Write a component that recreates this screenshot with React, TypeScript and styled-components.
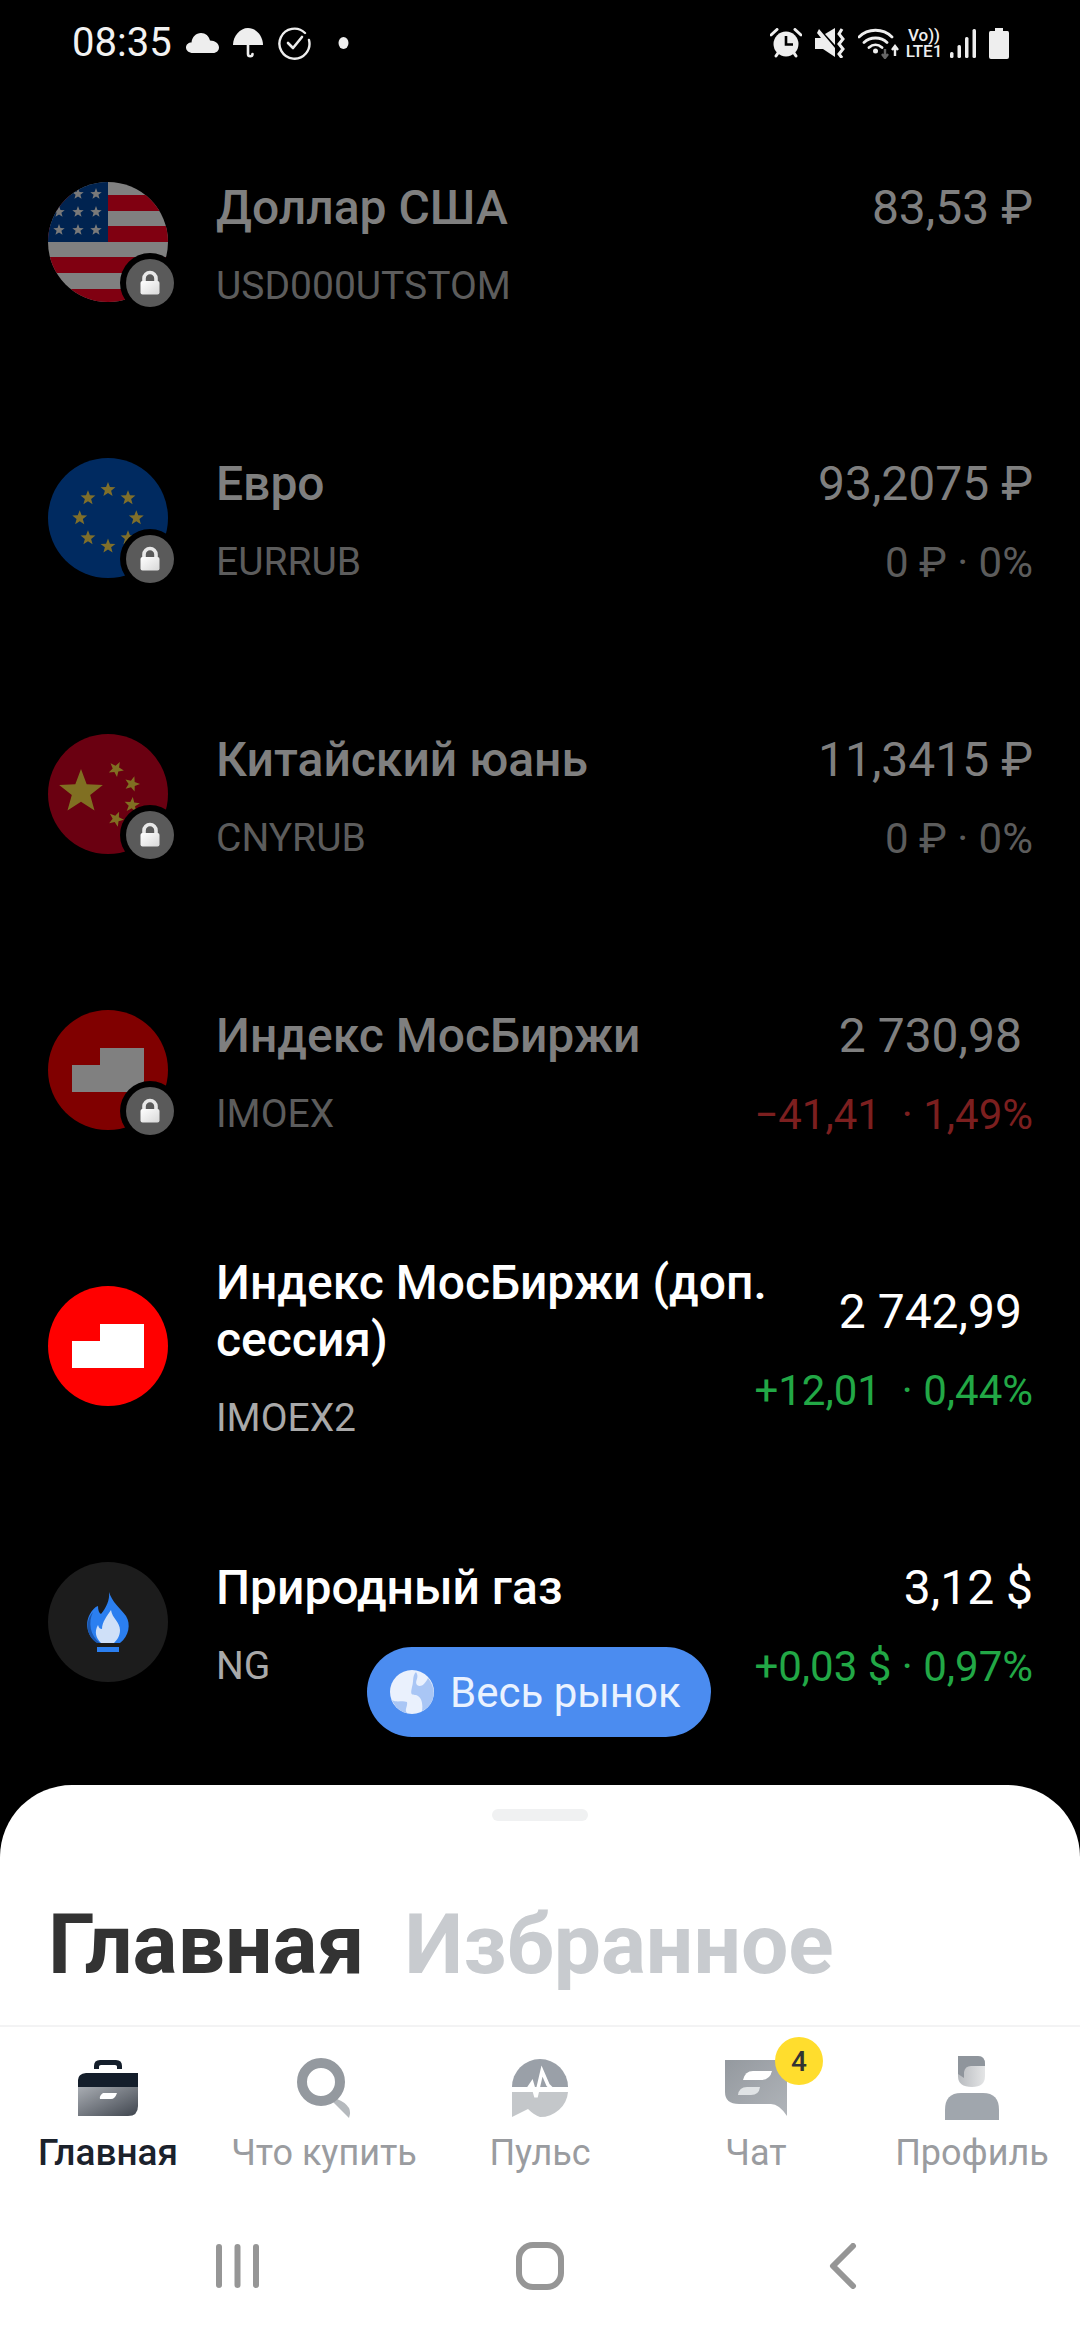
import React from 'react';
import styled, { createGlobalStyle } from 'styled-components';

const GlobalStyle = createGlobalStyle`
  html, body { margin: 0; padding: 0; background: #000; }
  #root { width: 1080px; height: 2340px; }
  * { box-sizing: border-box; }
`;

const Page = styled.div`
  width: 1080px;
  height: 2340px;
  display: flex;
  flex-direction: column;
  background: #000;
  overflow: hidden;
  font-family: Roboto, "Noto Sans", sans-serif;
`;

const StatusBar = styled.header`
  height: 86px;
  flex: none;
  display: flex;
  align-items: center;
  justify-content: space-between;
  padding: 0 71px 0 72px;
  color: #eee;
`;

const StatusGroup = styled.div`
  display: flex;
  align-items: center;
`;

const Clock = styled.span`
  font-size: 40px;
  line-height: 44px;
  width: 114px;
  color: #f2f2f2;
`;

const StatusIcon = styled.svg<{ $gap?: number }>`
  display: block;
  flex: none;
  margin-right: ${p => p.$gap ?? 0}px;
`;

const NetLabel = styled.div`
  width: 40px;
  margin-right: 6px;
  display: flex;
  flex-direction: column;
  align-items: center;
  font-size: 17px;
  line-height: 16px;
  font-weight: 500;
  color: #eee;
`;

const Market = styled.main`
  flex: 1;
  min-height: 0;
  position: relative;
  padding-top: 18px;
  overflow: hidden;
`;

const Row = styled.article`
  height: 276px;
  display: flex;
  align-items: center;
  padding: 0 47px 0 48px;
`;

const Avatar = styled.div`
  position: relative;
  width: 120px;
  height: 120px;
  flex: none;
  margin-right: 48px;
`;

const Face = styled.div<{ $dim: boolean }>`
  width: 120px;
  height: 120px;
  border-radius: 50%;
  overflow: hidden;
  opacity: ${p => (p.$dim ? 0.5 : 1)};
  svg { display: block; }
`;

const LockBadge = styled.div`
  position: absolute;
  right: -6px;
  bottom: -5px;
  width: 48px;
  height: 48px;
  border-radius: 50%;
  background: #5a5a5a;
  box-shadow: 0 0 0 6px #000;
  svg { display: block; }
`;

const Info = styled.div`
  flex: 1;
  min-width: 0;
  padding-top: 4px;
`;

const Title = styled.div<{ $dim: boolean }>`
  font-size: 48px;
  line-height: 57px;
  font-weight: 500;
  color: ${p => (p.$dim ? '#7f7f7f' : '#fff')};
`;

const Ticker = styled.div<{ $dim: boolean }>`
  margin-top: 26px;
  font-size: 39px;
  line-height: 48px;
  color: ${p => (p.$dim ? '#5c5c5c' : '#a9a9a9')};
`;

const Quote = styled.div`
  flex: none;
  padding-top: 6px;
  margin-left: -42px;
  text-align: right;
`;

const Price = styled.div<{ $dim: boolean; $inset: boolean }>`
  font-size: 48px;
  line-height: 57px;
  padding-right: ${p => (p.$inset ? 11 : 0)}px;
  color: ${p => (p.$dim ? '#7f7f7f' : '#fff')};
`;

const Change = styled.div<{ $tone: 'up' | 'down' | 'flat' }>`
  margin-top: 27px;
  min-height: 48px;
  font-size: 42px;
  line-height: 48px;
  white-space: pre;
  color: ${p => (p.$tone === 'up' ? '#22a846' : p.$tone === 'down' ? '#7c1f1f' : '#5c5c5c')};
`;

const MarketButton = styled.button`
  position: absolute;
  left: 367px;
  bottom: 48px;
  width: 344px;
  height: 90px;
  display: flex;
  align-items: center;
  gap: 16px;
  padding: 0 0 0 23px;
  border: 0;
  border-radius: 45px;
  background: #4b8cf0;
  color: #eaf2ff;
  font-family: inherit;
  font-size: 42px;
  svg { display: block; flex: none; }
`;

const Sheet = styled.section`
  height: 555px;
  flex: none;
  background: #fff;
  border-radius: 72px 72px 0 0;
  display: flex;
  flex-direction: column;
`;

const Grip = styled.div`
  width: 96px;
  height: 12px;
  margin: 24px auto 0;
  border-radius: 6px;
  background: #f0f1f2;
`;

const Tabs = styled.nav`
  height: 206px;
  display: flex;
  align-items: center;
  gap: 40px;
  padding: 44px 0 0 48px;
  border-bottom: 2px solid #f3f3f4;
  font-size: 84px;
  line-height: 100px;
  font-weight: 700;
`;

const BigTab = styled.span<{ $on: boolean }>`
  font-family: Roboto, sans-serif;
  color: ${p => (p.$on ? '#333' : '#c8cbcf')};
`;

const BottomNav = styled.div`
  display: grid;
  grid-template-columns: repeat(5, 1fr);
  padding-top: 26px;
`;

const NavItem = styled.div`
  position: relative;
  display: flex;
  flex-direction: column;
  align-items: center;
`;

const NavIcon = styled.div`
  position: relative;
  height: 70px;
  display: flex;
  align-items: center;
  justify-content: center;
  svg { display: block; }
`;

const NavLabel = styled.span<{ $on: boolean }>`
  margin-top: 8px;
  font-size: ${p => (p.$on ? 37 : 36)}px;
  line-height: 44px;
  font-weight: ${p => (p.$on ? 500 : 400)};
  color: ${p => (p.$on ? '#1b222c' : '#9a9ca0')};
  white-space: nowrap;
`;

const CountBadge = styled.span`
  position: absolute;
  left: 50px;
  top: -16px;
  width: 48px;
  height: 48px;
  border-radius: 50%;
  display: flex;
  align-items: center;
  justify-content: center;
  background: #ffdd2d;
  color: #333;
  font-size: 28px;
  font-weight: 500;
`;

const SystemNav = styled.div`
  display: grid;
  grid-template-columns: repeat(3, 1fr);
  padding: 0 86px 0 87px;
  margin-top: 67px;
  height: 48px;
  color: #969696;
`;

const SystemKey = styled.div`
  display: flex;
  align-items: center;
  justify-content: center;
`;

const star = (cx: number, cy: number, r: number, rot = 0) => {
  const pts: string[] = [];
  for (let i = 0; i < 10; i++) {
    const rad = i % 2 === 0 ? r : r * 0.42;
    const a = -Math.PI / 2 + rot + (i * Math.PI) / 5;
    pts.push(`${(cx + rad * Math.cos(a)).toFixed(2)},${(cy + rad * Math.sin(a)).toFixed(2)}`);
  }
  return pts.join(' ');
};

const UsFlag = () => (
  <svg width="120" height="120" viewBox="0 0 120 120">
    <rect width="120" height="120" fill="#fff" />
    {[[13, 16], [44, 16], [75, 16], [107, 13]].map(([y, h]) => (
      <rect key={y} x="0" y={y} width="120" height={h} fill="#ff0022" />
    ))}
    <rect width="60" height="60" fill="#00479f" />
    {[[30, 12], [48, 12], [11, 30], [30, 30], [48, 30], [11, 48], [30, 48], [48, 48]].map(([x, y]) => (
      <polygon key={`${x}-${y}`} points={star(x, y, 6)} fill="#f2f2f2" />
    ))}
  </svg>
);

const EuFlag = () => (
  <svg width="120" height="120" viewBox="0 0 120 120">
    <rect width="120" height="120" fill="#0055c0" />
    {Array.from({ length: 8 }, (_, i) => {
      const a = (i * Math.PI) / 4;
      return <polygon key={i} points={star(60 + 28.3 * Math.sin(a), 60 - 28.3 * Math.cos(a), 7.8)} fill="#ffdd55" />;
    })}
  </svg>
);

const CnFlag = () => (
  <svg width="120" height="120" viewBox="0 0 120 120">
    <rect width="120" height="120" fill="#d40022" />
    <polygon points={star(33, 58, 23)} fill="#ffdd44" />
    <polygon points={star(68, 35, 8, 0.5)} fill="#ffdd44" />
    <polygon points={star(84, 50, 8, 0.3)} fill="#ffdd44" />
    <polygon points={star(84, 71, 8, 0.1)} fill="#ffdd44" />
    <polygon points={star(68, 85, 8, 0.4)} fill="#ffdd44" />
  </svg>
);

const ImoexLogo = () => (
  <svg width="120" height="120" viewBox="0 0 120 120">
    <rect width="120" height="120" fill="#ff0000" />
    <path d="M24 55H52V38H96V82H24Z" fill="#fff" />
  </svg>
);

const GasLogo = () => (
  <svg width="120" height="120" viewBox="0 0 120 120">
    <rect width="120" height="120" fill="#1c1c1c" />
    <path d="M61 30C64 40 72 46 78 54C83 62 81 74 72 81L50 81C40 76 36 62 42 52C44 48 47 45 50 44C50 48 51 51 53 52C58 46 62 38 61 30Z" fill="#2b7ff0" />
    <path d="M45 50C40 60 42 74 52 81L49 81C39 75 36 60 45 50Z" fill="#1a56ad" />
    <path d="M63 48C64 56 72 60 72 68C72 74 69 78 66 81L53 81C48 76 46 70 50 63C51 66 52 67 54 67C54 60 59 54 63 48Z" fill="#cfe0f8" />
    <rect x="49" y="85" width="22" height="5" fill="#2b7ff0" />
  </svg>
);

const LockGlyph = () => (
  <svg width="48" height="48" viewBox="0 0 48 48">
    <defs>
      <linearGradient id="lockFill" x1="0" y1="0" x2="1" y2="1">
        <stop offset="0" stopColor="#fff" />
        <stop offset="1" stopColor="#d8d8d8" />
      </linearGradient>
    </defs>
    <path d="M18 23V19.5a6 6 0 0 1 12 0V23" fill="none" stroke="#e8e8e8" strokeWidth="3.6" />
    <rect x="14.5" y="22" width="19" height="13.5" rx="2" fill="url(#lockFill)" />
  </svg>
);

const Globe = () => (
  <svg width="44" height="44" viewBox="0 0 44 44">
    <circle cx="22" cy="22" r="22" fill="#eaf1fd" />
    <path d="M26 2C30 8 24 11 27 15C31 18 35 14 38 8C43 14 45 22 43 28C41 35 37 39 32 41C33 34 32 27 26 25C22 24 20 26 22 17C24 11 22 6 26 2Z" fill="#a9c6f5" />
    <path d="M2 30C7 33 12 30 17 32C18 36 14 40 17 43C10 42 5 37 2 30Z" fill="#a9c6f5" />
  </svg>
);

const Cloud = () => (
  <StatusIcon width="33" height="20" viewBox="0 0 33 20" $gap={14}>
    <path d="M7 20C3 20 0 17.500 0 14.500C0 11.500 2.500 9.500 5.500 9.500C6 4 10 0 15 0C19.500 0 23 3 24 7.500C29 7.500 33 10.500 33 14.500C33 17.500 30.500 20 27 20Z" fill="#eee" />
  </StatusIcon>
);

const Umbrella = () => (
  <StatusIcon width="30" height="30" viewBox="0 0 30 30" $gap={15}>
    <path d="M0 17C0 8 7 0 15 0C23 0 30 8 30 17Z" fill="#eee" />
    <path d="M15 15V26C15 29 19.500 29 19.500 26" fill="none" stroke="#eee" strokeWidth="2.600" strokeLinecap="round" />
  </StatusIcon>
);

const CheckRing = () => (
  <StatusIcon width="33" height="33" viewBox="0 0 33 33" $gap={27}>
    <path d="M27 6A15 15 0 1 0 31 13" fill="none" stroke="#eee" strokeWidth="2.400" strokeLinecap="round" />
    <path d="M10 16L15 21L24 10" fill="none" stroke="#eee" strokeWidth="2.600" strokeLinecap="round" strokeLinejoin="round" />
  </StatusIcon>
);

const Dot = () => (
  <StatusIcon width="11" height="12" viewBox="0 0 11 12">
    <ellipse cx="5.500" cy="6" rx="5" ry="6" fill="#eee" />
  </StatusIcon>
);

const Alarm = () => (
  <StatusIcon width="32" height="30" viewBox="0 0 32 30" $gap={13}>
    <circle cx="16" cy="16" r="12.500" fill="#eee" />
    <path d="M16 8V16.500H23" fill="none" stroke="#000" strokeWidth="2.600" />
    <path d="M1 7L7 1.500M31 7L25 1.500M6 28L8 25M26 28L24 25" stroke="#eee" strokeWidth="3" strokeLinecap="round" />
  </StatusIcon>
);

const Muted = () => (
  <StatusIcon width="30" height="30" viewBox="0 0 30 30" $gap={13}>
    <path d="M0 10H6L2 5L4 1L20 20V29L8 21H0Z" fill="#eee" />
    <path d="M10 6L20 0V17Z" fill="#eee" />
    <path d="M27 1L24 6L28 11L24 16L28 21L24 26L27 30" fill="none" stroke="#eee" strokeWidth="3" />
  </StatusIcon>
);

const Wifi = () => (
  <StatusIcon width="42" height="32" viewBox="0 0 42 32" $gap={4}>
    <path d="M1 10C10 1 25 1 34 10M6 15.500C12 9.500 23 9.500 29 15.500M11 20.500C15 17 20 17 24 20.500" fill="none" stroke="#eee" strokeWidth="2.800" strokeLinecap="round" />
    <circle cx="17.500" cy="24" r="2.500" fill="#eee" />
    <path d="M27 22V29M24 27L27 31L30 27" fill="none" stroke="#666" strokeWidth="2.400" />
    <path d="M37 29V20M34 23L37 19L40 23" fill="none" stroke="#eee" strokeWidth="2.400" />
  </StatusIcon>
);

const Signal = () => (
  <StatusIcon width="26" height="30" viewBox="0 0 26 30" $gap={13}>
    <rect x="0" y="24" width="3.500" height="6" rx="1.500" fill="#eee" />
    <rect x="7.500" y="17" width="3.500" height="13" rx="1.500" fill="#eee" />
    <rect x="15" y="9" width="3.500" height="21" rx="1.500" fill="#eee" />
    <rect x="22.500" y="1" width="3.500" height="29" rx="1.500" fill="#eee" />
  </StatusIcon>
);

const Battery = () => (
  <StatusIcon width="20" height="31" viewBox="0 0 20 31">
    <path d="M6 0H14V3H18.500Q20 3 20 5V29Q20 31 18 31H2Q0 31 0 29V5Q0 3 1.500 3H6Z" fill="#eee" />
  </StatusIcon>
);

const Briefcase = () => (
  <svg width="60" height="56" viewBox="0 0 60 56">
    <defs>
      <linearGradient id="caseFill" x1="0" y1="0" x2="1" y2="1">
        <stop offset="0" stopColor="#a9adb3" />
        <stop offset="1" stopColor="#3f454e" />
      </linearGradient>
    </defs>
    <path d="M16 9V6Q16 0 22 0H38Q44 0 44 6V9H39V6.500Q39 5 37 5H23Q21 5 21 6.500V9Z" fill="#141e2b" />
    <path d="M0 27V20Q0 14 8 13H60V27Z" fill="#141e2b" />
    <path d="M0 27H60V46Q60 56 50 56H0Z" fill="url(#caseFill)" />
    <path d="M25 33H39Q37 39 33 39H22Q21 36 25 33Z" fill="#fff" />
  </svg>
);

const SearchIcon = () => (
  <svg width="54" height="60" viewBox="0 0 54 60">
    <path d="M36 44L40 41Q48 44 52 50Q54 54 52 60Z" fill="#b5b9bd" />
    <circle cx="24" cy="24" r="19" fill="none" stroke="#94999f" strokeWidth="10" />
  </svg>
);

const PulseIcon = () => (
  <svg width="56" height="58" viewBox="0 0 56 58">
    <path d="M0 28A28 28 0 0 1 56 28Z" fill="#9aa0a8" />
    <path d="M0 33H56A28 27 0 0 1 28 58Q22 56 16 50L0 58Z" fill="#c4c7ca" />
    <path d="M0 30H16L20 24L24 38L30 12L36 26L40 30H56" fill="none" stroke="#fff" strokeWidth="3.500" />
  </svg>
);

const ChatIcon = () => (
  <svg width="62" height="56" viewBox="0 0 62 56">
    <defs>
      <linearGradient id="chatFill" x1="0" y1="0" x2="1" y2="1">
        <stop offset="0" stopColor="#94999f" />
        <stop offset="1" stopColor="#b0b4b9" />
      </linearGradient>
    </defs>
    <path d="M0 0H62V56Q54 44 46 44H14Q0 44 0 32Z" fill="url(#chatFill)" />
    <path d="M18 20Q20 11 28 11H47Q45 20 36 20Z" fill="#fff" />
    <path d="M13 35Q14 27 22 27H35Q34 35 26 35Z" fill="#e0e3e5" />
  </svg>
);

const ProfileIcon = () => (
  <svg width="54" height="64" viewBox="0 0 54 64">
    <defs>
      <linearGradient id="headFill" x1="0" y1="0" x2="1" y2="0">
        <stop offset="0" stopColor="#b8bbbf" />
        <stop offset="1" stopColor="#e4e5e6" />
      </linearGradient>
    </defs>
    <path d="M13 0H33Q40 0 40 8V20Q40 31 27 31Q13 31 13 20Z" fill="url(#headFill)" />
    <path d="M13 0H33Q40 0 40 8V10H26Q20 10 19 16V22L13 18Z" fill="#8f959c" />
    <path d="M0 64V54Q0 37 16 37H38Q54 37 54 54V64Z" fill="#a0a6ad" />
  </svg>
);

const Recents = () => (
  <svg width="44" height="46" viewBox="0 0 44 46">
    <rect x="0" y="1" width="6" height="44" rx="3" fill="currentColor" />
    <rect x="18.500" y="1" width="6" height="44" rx="3" fill="currentColor" />
    <rect x="37" y="1" width="6" height="44" rx="3" fill="currentColor" />
  </svg>
);

const HomeKey = () => (
  <svg width="48" height="48" viewBox="0 0 48 48">
    <rect x="3" y="3" width="42" height="42" rx="14" fill="none" stroke="currentColor" strokeWidth="6" />
  </svg>
);

const BackKey = () => (
  <svg width="28" height="46" viewBox="0 0 28 46">
    <path d="M24 3L4 23L24 43" fill="none" stroke="currentColor" strokeWidth="6" strokeLinecap="round" strokeLinejoin="round" />
  </svg>
);

type Item = {
  name: string;
  code: string;
  price: string;
  change: string;
  tone: 'up' | 'down' | 'flat';
  logo: React.ReactNode;
  locked: boolean;
  inset?: boolean;
};

const items: Item[] = [
  { name: 'Доллар США', code: 'USD000UTSTOM', price: '83,53 ₽', change: '', tone: 'flat', logo: <UsFlag />, locked: true },
  { name: 'Евро', code: 'EURRUB', price: '93,2075 ₽', change: '0 ₽ · 0%', tone: 'flat', logo: <EuFlag />, locked: true },
  { name: 'Китайский юань', code: 'CNYRUB', price: '11,3415 ₽', change: '0 ₽ · 0%', tone: 'flat', logo: <CnFlag />, locked: true },
  { name: 'Индекс МосБиржи', code: 'IMOEX', price: '2 730,98', change: '−41,41  · 1,49%', tone: 'down', logo: <ImoexLogo />, locked: true, inset: true },
  { name: 'Индекс МосБиржи (доп. сессия)', code: 'IMOEX2', price: '2 742,99', change: '+12,01  · 0,44%', tone: 'up', logo: <ImoexLogo />, locked: false, inset: true },
  { name: 'Природный газ', code: 'NG', price: '3,12 $', change: '+0,03 $ · 0,97%', tone: 'up', logo: <GasLogo />, locked: false },
];

const navItems = [
  { label: 'Главная', icon: <Briefcase />, on: true },
  { label: 'Что купить', icon: <SearchIcon />, on: false },
  { label: 'Пульс', icon: <PulseIcon />, on: false },
  { label: 'Чат', icon: <ChatIcon />, on: false, count: 4 },
  { label: 'Профиль', icon: <ProfileIcon />, on: false },
];

export default function App() {
  return (
    <Page>
      <GlobalStyle />
      <StatusBar>
        <StatusGroup>
          <Clock>08:35</Clock>
          <Cloud />
          <Umbrella />
          <CheckRing />
          <Dot />
        </StatusGroup>
        <StatusGroup>
          <Alarm />
          <Muted />
          <Wifi />
          <NetLabel>
            <span>Vo))</span>
            <span>LTE1</span>
          </NetLabel>
          <Signal />
          <Battery />
        </StatusGroup>
      </StatusBar>
      <Market>
        {items.map(item => (
          <Row key={item.code}>
            <Avatar>
              <Face $dim={item.locked}>{item.logo}</Face>
              {item.locked && (
                <LockBadge>
                  <LockGlyph />
                </LockBadge>
              )}
            </Avatar>
            <Info>
              <Title $dim={item.locked}>{item.name}</Title>
              <Ticker $dim={item.locked}>{item.code}</Ticker>
            </Info>
            <Quote>
              <Price $dim={item.locked} $inset={!!item.inset}>{item.price}</Price>
              <Change $tone={item.tone}>{item.change}</Change>
            </Quote>
          </Row>
        ))}
        <MarketButton>
          <Globe />
          Весь рынок
        </MarketButton>
      </Market>
      <Sheet>
        <Grip />
        <Tabs>
          <BigTab $on>Главная</BigTab>
          <BigTab $on={false}>Избранное</BigTab>
        </Tabs>
        <BottomNav>
          {navItems.map(n => (
            <NavItem key={n.label}>
              <NavIcon>
                {n.icon}
                {n.count ? <CountBadge>{n.count}</CountBadge> : null}
              </NavIcon>
              <NavLabel $on={n.on}>{n.label}</NavLabel>
            </NavItem>
          ))}
        </BottomNav>
        <SystemNav>
          <SystemKey><Recents /></SystemKey>
          <SystemKey><HomeKey /></SystemKey>
          <SystemKey><BackKey /></SystemKey>
        </SystemNav>
      </Sheet>
    </Page>
  );
}
